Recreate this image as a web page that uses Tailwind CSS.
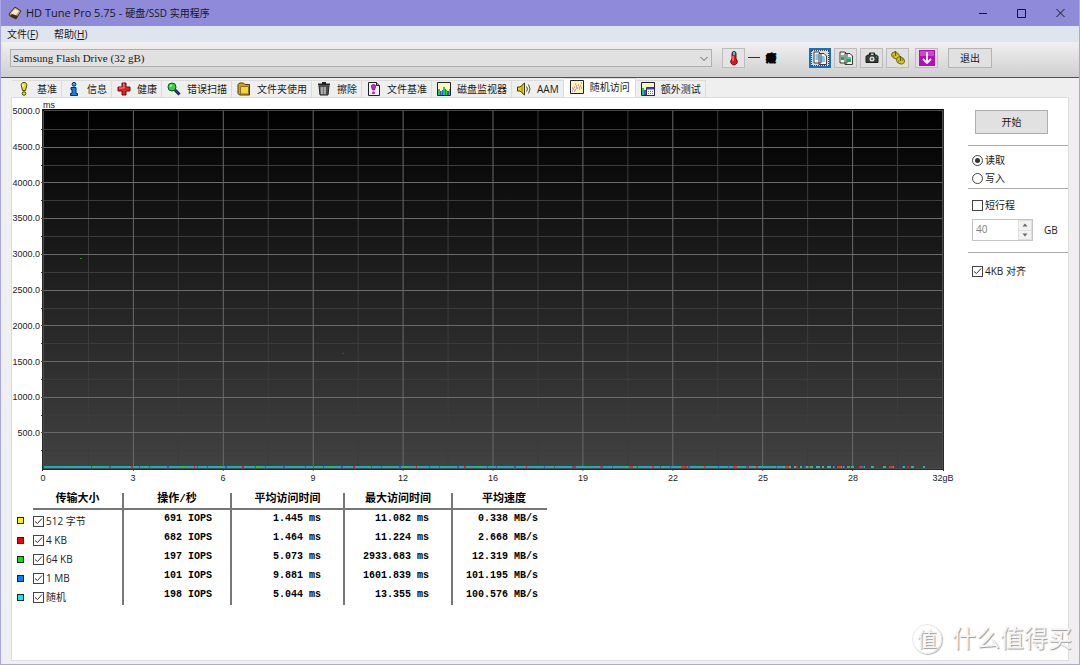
<!DOCTYPE html>
<html lang="zh-CN">
<head>
<meta charset="utf-8">
<title>HD Tune Pro 5.75 - 硬盘/SSD 实用程序</title>
<script src="https://cdn.jsdelivr.net/npm/@tailwindcss/browser@4"></script>
</head>
<body class="min-h-screen flex flex-col bg-[#efefef] border-x border-b border-[#a9a6e2] font-['Open_Sans','Noto_Sans_CJK_SC',sans-serif] text-[10px] leading-4 text-[#1a1a1a]">

<header class="h-[26px] -mx-px flex items-center bg-[#8f8bd9] pl-2 text-[#16161c]">
  <svg class="w-3.5 h-3.5 mr-1" viewBox="0 0 14 14"><path d="M1 8 7 1l6 4-5 8-6-3z" fill="#c9a56b" stroke="#40301f"/><path d="m3 7 4-4 4 2-4 5z" fill="#f6ead0"/><path d="m2 10 6 3 2-3-6-2z" fill="#3b2d22"/></svg>
  <h1 class="flex-1 text-[11px]">HD Tune Pro 5.75 - <span class="text-[10px]">硬盘/SSD 实用程序</span></h1>
  <div class="flex">
    <button aria-label="最小化" class="w-[38px] h-6 grid place-items-center"><svg class="w-3 h-3" viewBox="0 0 12 12"><path d="M2 6.500h8" stroke="#16161c"/></svg></button>
    <button aria-label="最大化" class="w-[39px] h-6 grid place-items-center"><svg class="w-3 h-3" viewBox="0 0 12 12"><path d="M1.500 2.500h8v8h-8z" fill="none" stroke="#16161c"/></svg></button>
    <button aria-label="关闭" class="w-[39px] h-6 grid place-items-center"><svg class="w-3 h-3" viewBox="0 0 12 12"><path d="m1.500 2 8 8m0-8-8 8" fill="none" stroke="#16161c"/></svg></button>
  </div>
</header>

<nav class="h-4 flex items-center gap-4 bg-[#dfe5ee] pl-1.5">
  <button>文件(<u>F</u>)</button>
  <button>帮助(<u>H</u>)</button>
</nav>

<div class="h-9 flex items-center bg-linear-to-b from-[#f0f0f0] to-[#cfcfcf] border-b border-[#505050] pl-[9px] pr-[87px] pb-1">
  <div class="relative flex-1">
    <select aria-label="驱动器" class="block w-full h-[18px] appearance-none bg-[#e1e1e1] border border-[#b0b0b0] pl-0.5 font-['Liberation_Serif','Noto_Sans_CJK_SC',serif] text-[11px] leading-4">
      <option>Samsung Flash Drive (32 gB)</option>
    </select>
    <svg class="absolute right-1 top-1.5 w-2 h-2 pointer-events-none" viewBox="0 0 8 8"><path d="m.5 2 3.500 3.500L7.500 2" fill="none" stroke="#606060"/></svg>
  </div>
  <button aria-label="温度" class="ml-2.5 w-[23px] h-5 grid place-items-center border border-[#bdbdbd] bg-[#e4e4e4]">
    <svg class="w-4 h-4" viewBox="0 0 16 16"><path d="M8 1.500a2 2 0 0 1 2 2V9a3.300 3.300 0 1 1-4 0V3.500a2 2 0 0 1 2-2z" fill="#e3141c" stroke="#5d1014"/><path d="M7 2h2v3H7z" fill="#3cc8d8"/><path d="M7 6v5" stroke="#ffb0a8"/></svg>
  </button>
  <span class="ml-[3px] w-[28px] flex items-center justify-between mr-[33px]"><span class="w-3 h-px bg-[#333]"></span><b class="font-black font-['Noto_Sans_CJK_SC'] text-black [-webkit-text-stroke:1px_black]">癈</b></span>
  <div class="flex gap-[3px]">
    <button aria-label="复制文本" class="w-[22px] h-5 grid place-items-center border-2 border-[#1272c8] bg-[#dcdcdc] outline outline-1 outline-dotted -outline-offset-3 outline-[#444]">
      <svg class="w-4 h-4" viewBox="0 0 16 16"><path d="M2 2h5l2 2v9H2zM7 3.500h5l2.500 2.500v8.500H7z" fill="#f3f7fb" stroke="#3c3c3c"/><path d="M3.500 5h3M3.500 7h3M3.500 9h3M8.500 7h4M8.500 9h4.500M8.500 11h4.500" stroke="#2f86da"/></svg>
    </button>
    <button aria-label="复制图像" class="w-[23px] h-5 grid place-items-center border border-[#bdbdbd] bg-[#e0e0e0]">
      <svg class="w-4 h-4" viewBox="0 0 16 16"><path d="M2 2h5l2 2v9H2zM7 3.500h5l2.500 2.500v8.500H7z" fill="#eef3ee" stroke="#3c3c3c"/><path d="M3 5h3v5H3zM8.500 7h4.500v5H8.500z" fill="#28a53c"/><path d="M3 5h3v2H3zM8.500 7h4.500v2H8.500z" fill="#5fb8c8"/></svg>
    </button>
    <button aria-label="屏幕截图" class="w-[23px] h-5 grid place-items-center border border-[#bdbdbd] bg-[#e0e0e0]">
      <svg class="w-4 h-4" viewBox="0 0 16 16"><path d="M5.500 5V3h5v2h2l1.500 1.500v6H2v-6L3.500 5z" fill="#3a3a3a" stroke="#1c1c1c"/><path d="M7 3.500h2.500V5H7z" fill="#ccc"/><circle cx="8" cy="9" r="2.500" fill="#dfe8e2"/><circle cx="8" cy="9" r="1.300" fill="#58776a"/><path d="M12 7h1" stroke="#3ad34a"/></svg>
    </button>
    <button aria-label="选项" class="w-[23px] h-5 grid place-items-center border border-[#bdbdbd] bg-[#e0e0e0]">
      <svg class="w-4 h-4" viewBox="0 0 16 16"><ellipse cx="5.500" cy="5.500" rx="4" ry="3" transform="rotate(30 5.500 5.500)" fill="#d8c81c" stroke="#756a08"/><ellipse cx="10.500" cy="10.500" rx="4.200" ry="3.200" transform="rotate(30 10.500 10.500)" fill="#d8c81c" stroke="#756a08"/><path d="M5.500 1v5M10.500 6v5" stroke="#60580a" stroke-width="1.300"/><path d="M3 5l1 2M8 10l1 2M12 9l1 2" stroke="#8f8310"/></svg>
    </button>
    <button aria-label="保存" class="ml-[3px] w-[23px] h-5 grid place-items-center border border-[#bdbdbd] bg-[#e0e0e0]">
      <svg class="w-4 h-4" viewBox="0 0 16 16"><path d="M0 0h16v16H0z" fill="#b30fb6"/><path d="M1 1h14v5H1z" fill="#cb45cd"/><path d="M8 2v11M4 9l4 4 4-4" fill="none" stroke="#fff" stroke-width="1.800"/></svg>
    </button>
  </div>
  <button class="ml-2.5 w-11 h-5 border border-[#b4b4b4] bg-[#e1e1e1] text-[10px]">退出</button>
</div>

<main class="flex-1 flex flex-col pl-2.5 pr-2.5 pb-[3px]">
  <div role="tablist" class="h-[19px] flex items-end whitespace-nowrap [&>button]:h-[17px] [&>button]:flex [&>button]:items-center [&>button]:gap-1.5 [&>button]:pl-[5px] [&>button]:pr-1 [&>button]:border-r [&>button]:border-t [&>button]:border-[#dcdcdc] [&_svg]:w-3.5 [&_svg]:h-3.5 ml-px">
    <button role="tab"><svg viewBox="0 0 14 14"><path d="M7 .5c2.200 0 3 1.300 2.700 3L8.500 8.500h-3L4.300 3.500C4 1.800 4.800.5 7 .5z" fill="#e9e117" stroke="#4b4805"/><circle cx="7" cy="11.500" r="1.800" fill="#e9e117" stroke="#4b4805"/><path d="M6 2v3" stroke="#fff"/></svg>基准</button>
    <button role="tab"><svg viewBox="0 0 14 14"><path d="M4 5.500h5v6h1.500v2h-7v-2H5v-4H4z" fill="#1583ee" stroke="#082a60"/><circle cx="7" cy="2.300" r="1.900" fill="#24b6f2" stroke="#082a60"/></svg>信息</button>
    <button role="tab"><svg viewBox="0 0 14 14"><path d="M5 1h4v4h4v4H9v4H5V9H1V5h4z" fill="#e02222" stroke="#641010"/><path d="M6 2h1v4H2" fill="none" stroke="#ff8c80"/></svg>健康</button>
    <button role="tab"><svg viewBox="0 0 14 14"><path d="m7.500 7.500 5 5" stroke="#10106e" stroke-width="3"/><path d="m8 8 4 4" stroke="#2a46d8"/><circle cx="5" cy="5" r="4" fill="#33d53a" stroke="#0c5a16"/><path d="M3 4.500 5 3" stroke="#c8ffc4" stroke-width="1.500"/></svg>错误扫描</button>
    <button role="tab"><svg viewBox="0 0 14 14"><path d="M1 2.500 2.500 1h4L8 2.500h4.500V13h-10L1 11.500z" fill="#cda51a" stroke="#4c3b06"/><path d="M3.500 4.500h8V12h-8z" fill="#f3d443" stroke="#8d7114"/></svg>文件夹使用</button>
    <button role="tab"><svg viewBox="0 0 14 14"><path d="M2 4h10l-1 9H3z" fill="#777" stroke="#202020"/><path d="M1 2.500h12M5 1h4" stroke="#202020" stroke-width="2"/><path d="M5 5v7M8 5v7" stroke="#ddd"/><path d="M10 5v7" stroke="#222"/></svg>擦除</button>
    <button role="tab"><svg viewBox="0 0 14 14"><path d="M1.500.5h8l3 3v10h-11z" fill="#f2f2f2" stroke="#222"/><path d="M9.500.5v3h3" fill="#aaa" stroke="#222"/><path d="M6.500 2.500c1.800 0 2.500 1 2 2.500L7.500 8h-2L4.500 5C4 3.500 4.700 2.500 6.500 2.500z" fill="#cf20cf" stroke="#5a0c5a" stroke-width=".7"/><circle cx="6.500" cy="10.700" r="1.500" fill="#cf20cf"/></svg>文件基准</button>
    <button role="tab"><svg viewBox="0 0 14 14"><path d="M.5.5h13v13H.5z" fill="#fbf6c3" stroke="#222"/><path d="M1 7h2v6H1zM4 9h1v4H4zM6 5h2v8H6zM9 8h1v5H9zM12 7h1v6h-1z" fill="#1fd13a"/><path d="M3 9h1v4H3zM5 8h1v5H5zM8 7h1v6H8zM10 9h2v4h-2z" fill="#3055e0"/></svg>磁盘监视器</button>
    <button role="tab"><svg viewBox="0 0 14 14"><path d="M.5 5H3l4.500-4v12L3 9H.5z" fill="#e4d816" stroke="#3c3804"/><path d="M5 3v8" stroke="#8d850a"/><path d="M9.500 4.500q2 2.500 0 5M11.500 2.500q3 4.500 0 9" fill="none" stroke="#54541e"/></svg>AAM</button>
    <button role="tab" aria-selected="true" class="bg-white -mb-px h-5! pl-1.5! pr-[5px]! pb-1"><svg viewBox="0 0 14 14"><path d="M.5.5h13v13H.5z" fill="#fdf3c0" stroke="#222"/><path d="M2 11h1M3 9h1M5 10h1M4 7h1M7 8h1M9 9h1M10 6h1M11 3h1M8 5h1M6 6h1" stroke="#e94b36"/><path d="M2 8h1M4 11h1M6 8h1M9 7h1M11 8h1M5 4h1" stroke="#9b5bd0"/></svg>随机访问</button>
    <button role="tab"><svg viewBox="0 0 14 14"><path d="M.5.5h13v13H.5z" fill="#fbf6c3" stroke="#222"/><path d="M1 6h2v7H1z" fill="#1fd13a"/><path d="M3 8h2v5H3z" fill="#3055e0"/><path d="M5.500 5.500h8v8h-8z" fill="#fff" stroke="#2a2a58"/><path d="M6 6.500h7" stroke="#3345c4" stroke-width="2"/><path d="M7 9.500h1m1 0h1m1 0h1M7 11.500h1m1 0h1m1 0h1" stroke="#c34b76"/></svg>额外测试</button>
  </div>

  <section class="flex-1 flex bg-white border border-[#dcdcdc]">
    <div class="flex-1 min-w-0">
      <!-- chart: y axis labels, plot and x axis labels -->
      <div class="flex pt-[7px] text-[9px] leading-3 font-['Liberation_Sans',sans-serif] text-[#222]">
        <div class="w-[29px] pr-px h-[370px] flex flex-col justify-between text-right shrink-0">
          <span>5000.0</span><span>4500.0</span><span>4000.0</span><span>3500.0</span><span>3000.0</span><span>2500.0</span><span>2000.0</span><span>1500.0</span><span>1000.0</span><span>500.0</span><span class="h-3"></span>
        </div>
        <div class="relative flex-1 min-w-0">
          <span class="absolute left-0.5 -top-1.5">ms</span>
          <svg class="block w-full h-[362px] mt-1" viewBox="0 0 904 362" preserveAspectRatio="none" shape-rendering="crispEdges">
            <defs><linearGradient id="plot" x2="0" y2="1"><stop stop-color="#000"/><stop offset="1" stop-color="#424242"/></linearGradient></defs>
            <path d="M1 0h903v361H1z" fill="url(#plot)"/>
            <path d="M47.500 2v358M137.500 2v358M227.500 2v358M317.500 2v358M407.500 2v358M497.500 2v358M587.500 2v358M677.500 2v358M767.500 2v358M857.500 2v358M0 20.500h904M0 56.500h904M0 91.500h904M0 127.500h904M0 163.500h904M0 199.500h904M0 234.500h904M0 270.500h904M0 306.500h904M0 341.500h904" stroke="#3c3c3c"/>
            <path d="M92.500 2v360M182.500 2v360M272.500 2v360M362.500 2v360M452.500 2v360M542.500 2v360M632.500 2v360M722.500 2v360M812.500 2v360M2 38.500h902M2 73.500h902M2 109.500h902M2 145.500h902M2 181.500h902M2 216.500h902M2 252.500h902M2 288.500h902M2 323.500h902" stroke="#6a6a6a"/>
            <path d="M1.500 0v362M903.500 0v362M2 360.500h902" stroke="#2a2a2a" fill="none"/>
            <path d="M3 1.500h900M2.500 2v357M902.500 2v358M3 359.500h900" stroke="#4a4a4a" fill="none"/>
            <path d="M0 38.500h2M0 73.500h2M0 109.500h2M0 145.500h2M0 181.500h2M0 216.500h2M0 252.500h2M0 288.500h2M0 323.500h2" stroke="#555"/>
            <!-- access-time samples near zero, one colour per transfer size -->
            <rect x="3" y="357" width="740" height="2" fill="#1aaeb6"/>
            <g stroke-width="2" fill="none">
              <path d="M743 358h60" stroke="#16c8b8" stroke-dasharray="4 2 2 3"/>
              <path d="M803 358h82" stroke="#1eb4c0" stroke-dasharray="2 6 3 9"/>
              <path d="M30 358h840" stroke="#1cc94e" stroke-dasharray="2 21 1 13 3 34"/>
              <path d="M50 358h820" stroke="#2364dc" stroke-dasharray="1 17 2 28 1 9"/>
              <path d="M90 358h780" stroke="#e02424" stroke-dasharray="2 61 1 47"/>
              <path d="M560 358h300" stroke="#d83a24" stroke-dasharray="2 27 4 19"/>
            </g>
            <path d="M39 149.500h2M302 244.500h1" stroke="#109a20"/>
          </svg>
          <div class="flex justify-between -ml-[14px] -mr-[15px] mt-px text-center [&>span]:w-8">
            <span>0</span><span>3</span><span>6</span><span>9</span><span>12</span><span>16</span><span>19</span><span>22</span><span>25</span><span>28</span><span>32gB</span>
          </div>
        </div>
      </div>

      <!-- results -->
      <table class="ml-[5px] mt-[9px] border-collapse text-right font-['Liberation_Mono','Noto_Sans_CJK_SC',monospace] font-bold text-black leading-[18px] [&_tr>*+*+*]:border-l-2 [&_tr>*+*+*]:border-[#777] [&_td]:py-0 [&_td]:pl-0 [&_td]:h-[19px] [&_td]:align-top">
        <thead>
          <tr class="text-center text-[11px] leading-3 [&>th]:h-4 [&>th]:py-0 [&>th]:align-top [&>th+th]:border-b-2 [&>th+th]:border-b-[#777]">
            <th class="w-4" aria-label="颜色"></th><th class="w-[90px]">传输大小</th><th class="w-[108px]">操作/秒</th><th class="w-[113px]">平均访问时间</th><th class="w-[108px]">最大访问时间</th><th class="w-[95px] pl-2">平均速度</th>
          </tr>
        </thead>
        <tbody class="[&_label]:flex [&_label]:items-center [&_label]:gap-0.5 [&_label]:pt-[3px] [&_label]:leading-4 [&_label]:font-normal [&_label]:font-['Open_Sans','Noto_Sans_CJK_SC',sans-serif] [&_label]:text-[#222] [&_label>span]:relative [&_label>span]:w-[11px] [&_label>span]:h-[11px] [&_input]:block [&_input]:appearance-none [&_input]:size-[11px] [&_input]:border [&_input]:border-[#444] [&_svg]:absolute [&_svg]:inset-0 [&_svg]:size-[11px] [&_svg]:pointer-events-none [&_i]:block [&_i]:size-[7px] [&_i]:mt-2 [&_i]:border [&_i]:border-[#222]">
          <tr><td><i class="bg-[#fff200]"></i></td><td><label><span><input type="checkbox" checked class="peer"><svg class="hidden peer-checked:block" viewBox="0 0 11 11"><path d="m2 5.500 2.500 2 4.500-5" fill="none" stroke="#333"/></svg></span>512 字节</label></td><td class="pr-[18px]">691 IOPS</td><td class="pr-[22px]">1.445 ms</td><td class="pr-[22px]">11.082 ms</td><td class="pr-[9px]">0.338 MB/s</td></tr>
          <tr><td><i class="bg-[#f00000]"></i></td><td><label><span><input type="checkbox" checked class="peer"><svg class="hidden peer-checked:block" viewBox="0 0 11 11"><path d="m2 5.500 2.500 2 4.500-5" fill="none" stroke="#333"/></svg></span>4 KB</label></td><td class="pr-[18px]">682 IOPS</td><td class="pr-[22px]">1.464 ms</td><td class="pr-[22px]">11.224 ms</td><td class="pr-[9px]">2.668 MB/s</td></tr>
          <tr><td><i class="bg-[#00e616]"></i></td><td><label><span><input type="checkbox" checked class="peer"><svg class="hidden peer-checked:block" viewBox="0 0 11 11"><path d="m2 5.500 2.500 2 4.500-5" fill="none" stroke="#333"/></svg></span>64 KB</label></td><td class="pr-[18px]">197 IOPS</td><td class="pr-[22px]">5.073 ms</td><td class="pr-[22px]">2933.683 ms</td><td class="pr-[9px]">12.319 MB/s</td></tr>
          <tr><td><i class="bg-[#0a7cf0]"></i></td><td><label><span><input type="checkbox" checked class="peer"><svg class="hidden peer-checked:block" viewBox="0 0 11 11"><path d="m2 5.500 2.500 2 4.500-5" fill="none" stroke="#333"/></svg></span>1 MB</label></td><td class="pr-[18px]">101 IOPS</td><td class="pr-[22px]">9.881 ms</td><td class="pr-[22px]">1601.839 ms</td><td class="pr-[9px]">101.195 MB/s</td></tr>
          <tr><td><i class="bg-[#00f0f0]"></i></td><td><label><span><input type="checkbox" checked class="peer"><svg class="hidden peer-checked:block" viewBox="0 0 11 11"><path d="m2 5.500 2.500 2 4.500-5" fill="none" stroke="#333"/></svg></span>随机</label></td><td class="pr-[18px]">198 IOPS</td><td class="pr-[22px]">5.044 ms</td><td class="pr-[22px]">13.355 ms</td><td class="pr-[9px]">100.576 MB/s</td></tr>
        </tbody>
      </table>
    </div>

    <aside class="w-[100px] ml-6 shrink-0 [&_label]:flex [&_label]:items-center [&_label]:gap-0.5 [&_label]:h-[18px]">
      <div class="pt-3 h-[47px] pl-[7px]"><button class="w-[73px] h-6 border border-[#adadad] bg-[#e1e1e1]">开始</button></div>
      <div class="border-t border-[#aaa] h-[43px] pt-[5px] pl-1">
        <label><span class="relative size-[11px]"><input type="radio" name="mode" checked class="peer block appearance-none size-[11px] rounded-full border border-[#444]"><span class="hidden peer-checked:block absolute inset-[3px] rounded-full bg-[#333]"></span></span>读取</label>
        <label><span class="relative size-[11px]"><input type="radio" name="mode" class="peer block appearance-none size-[11px] rounded-full border border-[#444]"><span class="hidden peer-checked:block absolute inset-[3px] rounded-full bg-[#333]"></span></span>写入</label>
      </div>
      <div class="border-t border-[#aaa] h-16 pt-[7px] pl-1">
        <label><input type="checkbox" class="appearance-none size-[11px] border border-[#444]">短行程</label>
        <div class="flex items-center mt-[5px]">
          <input type="text" aria-label="短行程容量" value="40" disabled class="w-[46px] h-[22px] border border-r-0 border-[#c4c4c4] bg-white pl-[3px] pb-0.5 text-[#808080]">
          <div class="w-[15px] h-[22px] p-px flex flex-col gap-px border border-l-0 border-[#c4c4c4] bg-[#dedede] [&>button]:flex-1 [&>button]:grid [&>button]:place-items-center [&>button]:bg-[#f2f2f2]">
            <button aria-label="增加"><svg class="w-1.5 h-1" viewBox="0 0 6 4"><path d="m.5 3.500 2.500-3 2.500 3z" fill="#666"/></svg></button>
            <button aria-label="减少"><svg class="w-1.5 h-1" viewBox="0 0 6 4"><path d="m.5.5 2.500 3 2.500-3z" fill="#666"/></svg></button>
          </div>
          <span class="ml-[11px]">GB</span>
        </div>
      </div>
      <div class="border-t border-[#aaa] pt-[9px] pl-1">
        <label><span class="relative size-[11px]"><input type="checkbox" checked class="peer block appearance-none size-[11px] border border-[#444]"><svg class="hidden peer-checked:block absolute inset-0 size-[11px] pointer-events-none" viewBox="0 0 11 11"><path d="m2 5.500 2.500 2 4.500-5" fill="none" stroke="#333"/></svg></span>4KB 对齐</label>
      </div>
    </aside>
  </section>
</main>

<!-- watermark -->
<div class="absolute right-2 bottom-2 flex items-center gap-2.5 pointer-events-none font-['Noto_Sans_CJK_SC',sans-serif] text-[#f4f4f4] text-2xl leading-8 [text-shadow:1px_1px_1px_#999]">
  <span class="size-[30px] flex items-center justify-center rounded-full border border-[#e8e8e8] shadow-[1px_1px_1px_#bbb] text-xl leading-7">值</span>
  <span class="pb-1">什么值得买</span>
</div>
</body>
</html>
